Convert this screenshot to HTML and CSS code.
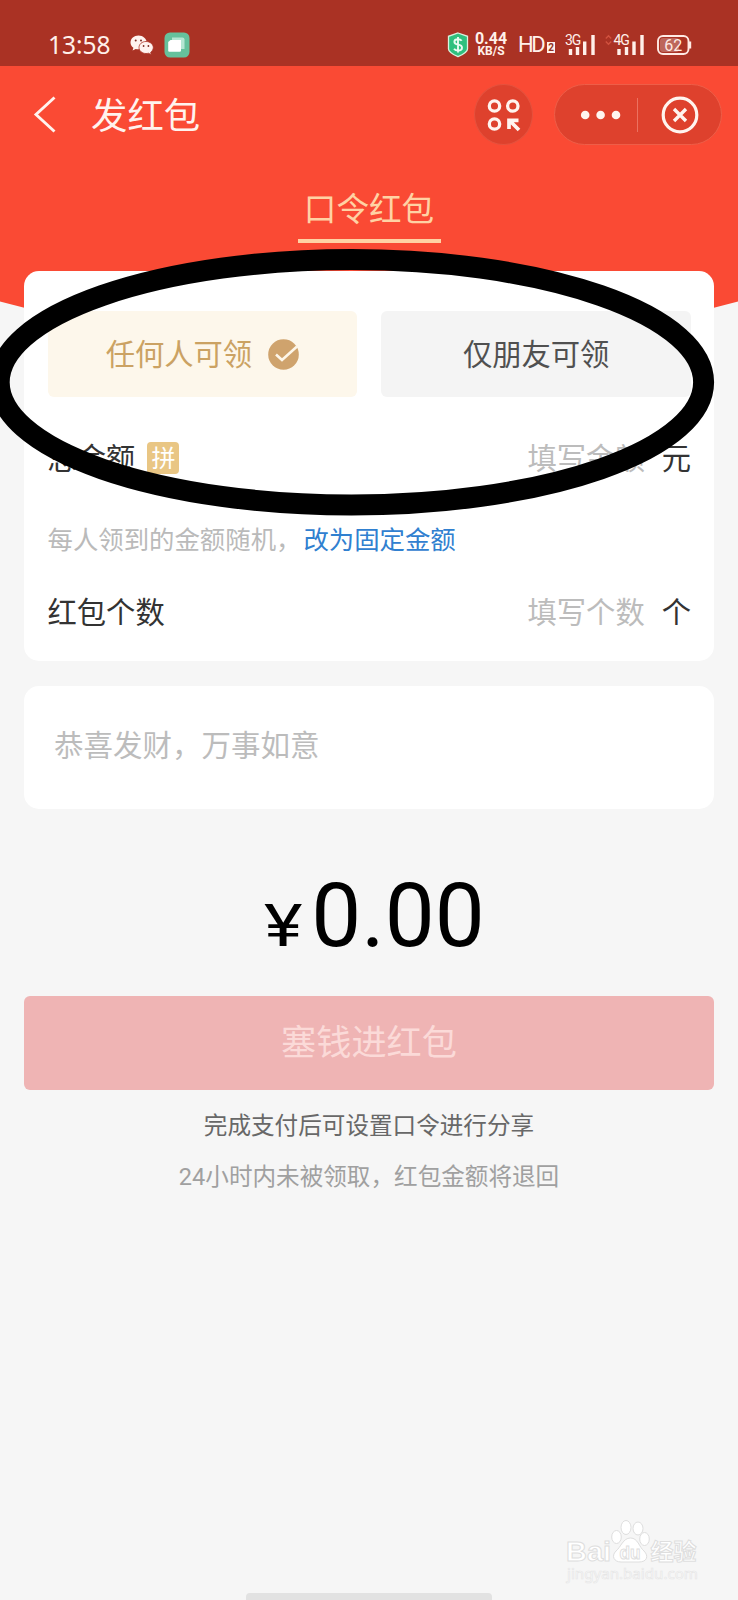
FILE: index.html
```html
<!DOCTYPE html>
<html lang="zh-CN">
<head>
<meta charset="utf-8">
<title>发红包</title>
<link rel="stylesheet" href="styles.css">
</head>
<body>
<div class="screen">
  <header class="status">
    <span class="clock">13:58</span>
    <svg class="wechat" width="24" height="20" viewBox="0 0 24 20">
      <path d="M8.500.5C4 .5.5 3.600.5 7.600c0 2.100 1.100 3.900 2.900 5.200L2.600 15.500l3.100-1.600q1.300.4 2.800.4C13 14.300 16.800 11.300 16.800 7.600S13 .5 8.500.5z" fill="#fff3ef"/>
      <path d="M16 6.500c-3.900 0-7 2.600-7 6s3.100 6 7 6q1.300 0 2.400-.3l2.800 1.400-.5-2.400c1.500-1.100 2.600-2.700 2.600-4.700 0-3.400-3.400-6-7.300-6z" fill="#fff3ef" stroke="#aa3224" stroke-width=".8"/>
      <g fill="#7c2f25"><circle cx="5.700" cy="5.600" r="1"/><circle cx="11" cy="5.600" r="1"/><circle cx="13.600" cy="11" r=".9"/><circle cx="18.400" cy="11" r=".9"/></g>
    </svg>
    <svg class="cards" width="26" height="26" viewBox="0 0 26 26">
      <rect x=".5" y=".5" width="25" height="25" rx="5.500" fill="#66c19c"/>
      <path d="M8 5.500h10.500q2 0 2 2V17H8z" fill="#b5e6d3"/>
      <path d="M6.500 8H17v10.500q0 1.300-1.300 1.300H5.300q-1.100 0-1.100-1.300V10z" fill="#fff"/>
    </svg>
    <span class="grow"></span>
    <svg class="shield" width="22" height="26" viewBox="0 0 22 26">
      <path d="M11 1 20.500 4.300V17Q20.500 20.500 11 24.700 1.500 20.500 1.500 17V4.300z" fill="#2fc07e" stroke="#d9f3df" stroke-width="1.300"/>
      <path d="M14.700 8.800Q13.500 7.200 11 7.200 7.400 7.200 7.400 9.700 7.400 12 11 12.600 15 13.200 15 15.700 15 18.500 11 18.500 8.300 18.500 7 16.700M11 5v15.500" fill="none" stroke="#e8fbf1" stroke-width="1.900"/>
    </svg>
    <span class="speed"><b class="rate">0.44</b><b class="unit">KB/S</b></span>
    <span class="hd">HD<i class="sim">2</i></span>
    <svg class="signal" width="32" height="24" viewBox="0 0 32 24">
      <text class="net" x="0" y="12">3G</text>
      <path d="M5.500 16v6M12.500 14v8M19.700 8.500V22M28 2v20" stroke="#fff0ea" stroke-width="3.400"/>
    </svg>
    <svg class="signal second" width="40" height="24" viewBox="0 0 40 24">
      <path d="M.8 5.500 3.500 2.800 6.200 5.500M.8 8.500 3.500 11.200 6.200 8.500" fill="none" stroke="#d1523f" stroke-width="1.400"/>
      <text class="net" x="8.500" y="12">4G</text>
      <path d="M14 16v6M21.500 14v8M29 8.500V22M37 2v20" stroke="#fff0ea" stroke-width="3.400"/>
    </svg>
    <svg class="battery" width="35" height="20" viewBox="0 0 35 20">
      <rect x="1" y="1" width="30.500" height="18" rx="5" fill="none" stroke="#ffeae4" stroke-width="1.900"/>
      <rect x="3" y="3" width="19" height="14" rx="3" fill="#bd665b"/>
      <path d="M33 6.500v7" stroke="#ffeae4" stroke-width="2.400"/>
      <text class="level" x="16.300" y="15.700" text-anchor="middle">62</text>
    </svg>
  </header>

  <div class="hero">
    <svg class="curve" width="738" height="72" viewBox="0 0 738 72"><path d="M0 0H738V31.500Q600 70 369 70T0 31.500z" fill="#fa4a34"/></svg>
    <nav class="bar">
      <svg class="back" width="24" height="38" viewBox="0 0 24 38"><path d="M22.500 1.500 4 18.500 22.500 35.500" fill="none" stroke="#fff3ee" stroke-width="2.900"/></svg>
      <h1 class="title">发红包</h1>
      <span class="grow"></span>
      <span class="round">
        <svg width="34" height="34" viewBox="0 0 34 34" fill="none" stroke="#fff4ef" stroke-width="3.300">
          <circle cx="7.500" cy="8" r="5.200"/><circle cx="25.800" cy="8" r="5.200"/><circle cx="7.500" cy="26" r="5.200"/>
          <path d="M22 31V22.400H31.500M23 23 32 32" stroke-width="3.700"/>
        </svg>
      </span>
      <span class="capsule">
        <svg class="dots" width="42" height="10" viewBox="0 0 42 10" fill="#fff4ef"><circle cx="5.200" cy="5" r="4.300"/><circle cx="20.600" cy="5" r="4.300"/><circle cx="36" cy="5" r="4.300"/></svg>
        <i class="divider"></i>
        <svg class="close" width="38" height="38" viewBox="0 0 38 38" fill="none" stroke="#fff4ef"><circle cx="19" cy="19" r="16.800" stroke-width="3.200"/><path d="M13 13 25 25M25 13 13 25" stroke-width="3.400"/></svg>
      </span>
    </nav>
    <div class="tabs"><span class="tab">口令红包</span></div>
  </div>

  <main class="content">
    <section class="card form">
      <div class="choices">
        <div class="choice active"><span class="lift">任何人可领</span>
          <svg class="check" width="31" height="31" viewBox="0 0 31 31"><circle cx="15.500" cy="15.500" r="15.300" fill="#cfa36d"/><path d="M8 15.500 14 21 29 7.500" fill="none" stroke="#fdf6e9" stroke-width="2.600"/></svg>
        </div>
        <div class="choice"><span class="lift">仅朋友可领</span></div>
      </div>
      <div class="row total"><span>总金额</span><span class="badge">拼</span><span class="grow"></span><span class="placeholder">填写金额</span><span>元</span></div>
      <div class="note">每人领到的金额随机，<a class="link">改为固定金额</a></div>
      <div class="row"><span>红包个数</span><span class="grow"></span><span class="placeholder">填写个数</span><span>个</span></div>
    </section>
    <section class="card greeting">恭喜发财，万事如意</section>
    <div class="amount"><span class="yen">¥</span><span>0.00</span></div>
    <div class="submit">塞钱进红包</div>
    <p class="hint dark">完成支付后可设置口令进行分享</p>
    <p class="hint"><span class="digits">24</span>小时内未被领取，红包金额将退回</p>
  </main>

  <svg class="ring" width="738" height="290" viewBox="0 238 738 290"><ellipse cx="351.400" cy="382.300" rx="352.200" ry="122.700" fill="none" stroke="#000" stroke-width="21"/></svg>

  <svg class="watermark" width="150" height="70" viewBox="0 0 150 70">
    <g fill="#fff" stroke="#dedede" stroke-width="1">
      <text class="wm-brand" x="12" y="45" textLength="45" lengthAdjust="spacingAndGlyphs">Bai</text>
      <ellipse cx="62.500" cy="21" rx="4.800" ry="6.500"/>
      <ellipse cx="72" cy="11.500" rx="5" ry="7"/>
      <ellipse cx="84" cy="12.500" rx="5" ry="6.500"/>
      <ellipse cx="90.500" cy="23" rx="4.800" ry="6.500"/>
      <path d="M76.500 22C69 22 67 31 62 35 57 40 60 46 67 46H85C93 46 95 40 90 35 85 31 84 22 76.500 22z"/>
      <text class="wm-du" x="65.500" y="42.500" textLength="21" lengthAdjust="spacingAndGlyphs">du</text>
      <text class="wm-cn" x="96.500" y="43.500" textLength="46" lengthAdjust="spacingAndGlyphs">经验</text>
    </g>
    <text class="wm-url" x="13" y="63" textLength="131" lengthAdjust="spacingAndGlyphs">jingyan.baidu.com</text>
  </svg>
  <i class="home"></i>
</div>
</body>
</html>
```
FILE: styles.css
```css
* { box-sizing: border-box; }
body { margin: 0; background: #f6f6f6; font-family: "Noto Sans CJK SC", sans-serif; font-weight: 400; }
.screen { position: relative; width: 738px; height: 1600px; overflow: hidden; background: #f6f6f6; }
.grow { flex: 1; }

.status { display: flex; align-items: center; height: 66px; padding: 24px 46px 0 48px; background: #aa3224; color: #fff0ea; font-family: Roboto, sans-serif; }
.clock { width: 82px; font-family: "Noto Sans", sans-serif; font-size: 24.5px; line-height: 26px; }
.cards { margin-left: 10px; }
.shield { margin-right: 5px; }
.speed { display: flex; flex-direction: column; align-items: center; width: 34px; }
.rate { font-size: 16px; line-height: 13px; font-weight: 700; }
.unit { font-size: 12px; line-height: 13px; font-weight: 700; }
.hd { display: flex; align-items: flex-end; margin-left: 10px; width: 37px; font-size: 22px; line-height: 22px; letter-spacing: -2.500px; }
.sim { width: 8px; height: 11px; margin: 0 0 3px 4px; background: #fff0ea; color: #8f3024; font-size: 10px; line-height: 11px; font-style: normal; font-weight: 700; text-align: center; letter-spacing: 0; }
.signal { margin-left: 10px; }
.signal.second { margin-left: 8px; }
.net { font-size: 14px; letter-spacing: -1px; fill: #fff0ea; }
.battery { margin-left: 12px; }
.level { font-size: 16px; fill: #ffeae4; }

.hero { position: relative; height: 205px; background: #fa4a34; }
.curve { position: absolute; left: 0; top: 204px; }
.bar { display: flex; align-items: center; height: 97px; padding: 0 16px 0 32px; }
.title { margin: -4px 0 0 35px; font-size: 36.400px; line-height: 50px; font-weight: 400; color: #fff3ee; }
.round { display: flex; align-items: center; justify-content: center; width: 59px; height: 61px; margin-right: 21px; border: 1px solid #e5523e; border-radius: 50%; background: #de412d; }
.capsule { display: flex; align-items: center; width: 168px; height: 61px; padding-left: 25px; border: 1px solid #ee5e48; border-radius: 31px; background: #de412d; }
.divider { width: 1px; height: 34px; margin-left: 15px; background: #ec7160; }
.close { margin-left: 23px; }
.tabs { display: flex; justify-content: center; padding-top: 17px; }
.tab { width: 143px; height: 63px; border-bottom: 4px solid #ffd2a4; color: #ffd2a4; font-size: 32.600px; line-height: 54px; text-align: center; }

.content { position: relative; padding: 0 24px; }
.card { background: #fff; border-radius: 15px; }
.form { height: 390px; padding: 40px 23px 0 23.500px; }
.choices { display: grid; grid-template-columns: 1fr 1fr; gap: 24px; }
.choice { display: flex; align-items: center; justify-content: center; height: 86px; border-radius: 6px; background: #f4f4f4; color: #505050; font-size: 29.300px; }
.lift { margin-top: -4px; }
.active { background: #fdf7eb; color: #cba263; }
.check { margin-left: 16px; }
.row { display: flex; align-items: center; height: 44px; font-size: 29.300px; line-height: 44px; color: #333; }
.total { margin-top: 37px; }
.badge { width: 32px; height: 32px; margin: 3px 0 0 12px; border-radius: 4px; background: #e9c684; color: #fff; font-size: 24px; line-height: 30px; text-align: center; }
.placeholder { margin-right: 17px; color: #bcbcbc; }
.note { margin: 38px 0 28px; height: 44px; font-size: 25.400px; line-height: 44px; color: #bababa; }
.link { margin-left: 2px; color: #3080d0; }
.greeting { height: 123px; margin-top: 25px; padding-left: 30px; font-size: 29.500px; line-height: 115px; color: #bcbcbc; }
.amount { display: flex; align-items: baseline; justify-content: center; height: 187px; padding: 54px 0 0 11px; font-family: Roboto, sans-serif; font-size: 89px; line-height: 106px; color: #000; }
.yen { margin-right: 15.500px; font-size: 60px; font-family: Roboto, sans-serif; transform: scaleX(1.22); transform-origin: left; }
.submit { height: 94px; border-radius: 6px; background: #efb4b4; color: #fbdad8; font-size: 35.200px; line-height: 87px; text-align: center; }
.hint { margin: 0; height: 51px; font-size: 23.600px; line-height: 49px; color: #a0a0a0; text-align: center; }
.digits { font-family: Roboto, sans-serif; }
.dark { margin-top: 10px; color: #686868; }

.ring { position: absolute; left: 0; top: 238px; }
.watermark { position: absolute; left: 554px; top: 1516px; }
.wm-brand { font: 700 28px "Liberation Sans", sans-serif; }
.wm-du { font: 700 19px "Liberation Sans", sans-serif; }
.wm-cn { font: 700 23px "Noto Sans CJK SC", sans-serif; }
.wm-url { font: 400 15px "Noto Sans", sans-serif; fill: #fff; stroke: #e6e6e6; stroke-width: .7px; }
.home { position: absolute; left: 246px; bottom: 0; width: 246px; height: 7px; border-radius: 4px 4px 0 0; background: #e2e2e2; }
```
